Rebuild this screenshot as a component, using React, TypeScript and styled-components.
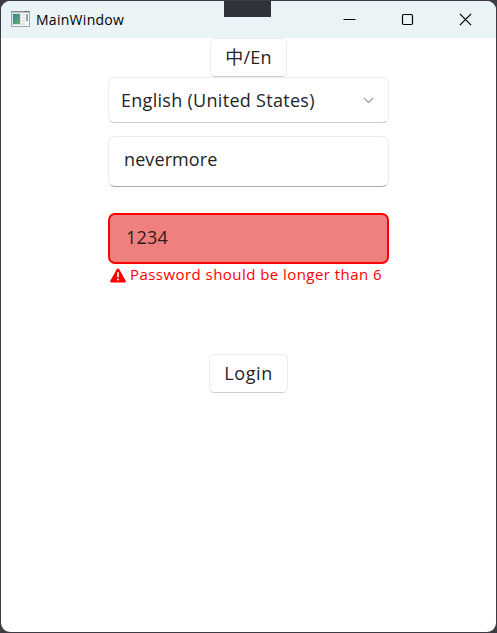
import React from "react";
import styled, { createGlobalStyle } from "styled-components";

const GlobalStyle = createGlobalStyle`
  *, *::before, *::after { box-sizing: border-box; }
  html, body { margin: 0; background: #3d3c44; overflow: hidden; }
`;

const Desktop = styled.div`
  width: 497px;
  height: 633px;
  padding: 1px;
  background: #3d3c44;
  font-family: "Open Sans", "Noto Sans CJK SC", sans-serif;
`;

const Window = styled.main`
  position: relative;
  width: 495px;
  height: 631px;
  display: flex;
  flex-direction: column;
  background: #fff;
  border-radius: 9px;
  overflow: hidden;
`;

const TitleBar = styled.header`
  height: 37px;
  flex: none;
  display: flex;
  align-items: center;
  padding: 0 2px 0 9px;
  background: #eaf4f7;
`;

const Title = styled.span`
  margin-left: 5px;
  flex: 1;
  font-size: 14px;
  line-height: 20px;
  letter-spacing: 0.28px;
  color: #000;
`;

const CaptionButton = styled.button`
  width: 58px;
  height: 37px;
  padding: 0 0 1px;
  border: 0;
  background: none;
  display: flex;
  align-items: center;
  justify-content: center;
`;

const TopNotch = styled.div`
  position: absolute;
  left: 223px;
  top: -1px;
  width: 47px;
  height: 17px;
  background: #2f323b;
`;

const Form = styled.form`
  display: flex;
  flex-direction: column;
  align-items: center;
`;

const Label = styled.span<{ $spacing?: number }>`
  font-size: 18px;
  line-height: 24px;
  letter-spacing: ${(p) => p.$spacing ?? 0}px;
  white-space: nowrap;
`;

const PushButton = styled.button<{ $width: number; $top?: number }>`
  width: ${(p) => p.$width}px;
  height: 39px;
  margin-top: ${(p) => p.$top ?? 0}px;
  padding: 0 0 2px;
  border: 1px solid #ececec;
  border-bottom-color: #cfcfcf;
  border-radius: 5px;
  background: #fff;
  color: #242424;
  font-family: inherit;
  display: flex;
  align-items: center;
  justify-content: center;
`;

const Select = styled.div`
  width: 281px;
  height: 46px;
  padding: 0 14px 0 12px;
  border: 1px solid #ececec;
  border-bottom-color: #cccccc;
  border-radius: 6px;
  color: #242424;
  display: flex;
  align-items: center;
  justify-content: space-between;
`;

const Field = styled.div<{ $invalid?: boolean }>`
  width: 281px;
  height: 51px;
  margin-top: ${(p) => (p.$invalid ? 26 : 13)}px;
  padding: ${(p) => (p.$invalid ? "10px 16px" : "10px 15px")};
  border: ${(p) => (p.$invalid ? "2px solid #ff0000" : "1px solid #ebebeb")};
  border-bottom-color: ${(p) => (p.$invalid ? "#ff0000" : "#a9a9a9")};
  border-radius: 7px;
  background: ${(p) => (p.$invalid ? "#f08080" : "#fff")};
  color: ${(p) => (p.$invalid ? "#301a1a" : "#242424")};
`;

const ErrorRow = styled.div`
  width: 281px;
  height: 22px;
  padding-left: 2px;
  display: flex;
  align-items: center;
  gap: 4px;
  color: #ff0000;
  font-size: 15px;
  line-height: 20px;
  letter-spacing: 0.45px;
  white-space: nowrap;
`;

const ErrorText = styled.span`
  padding-bottom: 2px;
`;

const AppIcon = () => (
  <svg width="21" height="17" viewBox="0 0 21 17">
    <defs>
      <linearGradient id="preview" x1="0" y1="0" x2="1" y2="1">
        <stop offset="0" stopColor="#3c78a2" />
        <stop offset="1" stopColor="#62b866" />
      </linearGradient>
    </defs>
    <rect x="1.5" y="0.5" width="18" height="15" fill="#f8f9fa" stroke="#a2a9ac" />
    <path d="M1 .8H20" stroke="#858e95" strokeWidth="1.5" />
    <path d="M14 .5h1m1 0h1m1 0h1" stroke="#4b5358" />
    <rect x="2" y="2" width="9" height="12" fill="#d9e0e0" />
    <rect x="3" y="3" width="7" height="10" fill="url(#preview)" />
    <path d="M12 4h3M12 7h3M12 10h3M12 13h3" stroke="#d7dadd" strokeWidth="1.5" />
    <rect x="16" y="3" width="2" height="7" fill="#83ad9f" />
  </svg>
);

const MinimizeIcon = () => (
  <svg width="13" height="13" viewBox="0 0 13 13">
    <path d="M.5 6.5H12.5" stroke="#000" strokeWidth="1" />
  </svg>
);

const MaximizeIcon = () => (
  <svg width="13" height="13" viewBox="0 0 13 13" fill="none">
    <rect x="1.5" y="1.5" width="10" height="10" rx="1.2" stroke="#000" strokeWidth="1.2" />
  </svg>
);

const CloseIcon = () => (
  <svg width="13" height="13" viewBox="0 0 13 13">
    <path d="M.9.9l11.2 11.2M12.1.9.9 12.1" stroke="#000" strokeWidth="1.2" />
  </svg>
);

const ChevronIcon = () => (
  <svg width="11" height="7" viewBox="0 0 11 7" fill="none">
    <path d="M.8.9l4.7 4.6L10.2.9" stroke="#9897a1" strokeWidth="1.2" />
  </svg>
);

const WarningIcon = () => (
  <svg width="16" height="15" viewBox="0 0 16 15">
    <path d="M8 .5q.8 0 1.2.7l6.5 11.5q.6 1.8-1.2 1.8h-13q-1.8 0-1.2-1.8L6.8 1.2Q7.2.5 8 .5Z" fill="#f00" />
    <path d="M8 4.7v4.1" stroke="#fff" strokeWidth="1.6" strokeLinecap="round" />
    <circle cx="8" cy="11.6" r="1" fill="#fff" />
  </svg>
);

export default function App() {
  return (
    <Desktop>
      <GlobalStyle />
      <Window>
        <TitleBar>
          <AppIcon />
          <Title>MainWindow</Title>
          <CaptionButton aria-label="Minimize"><MinimizeIcon /></CaptionButton>
          <CaptionButton aria-label="Maximize"><MaximizeIcon /></CaptionButton>
          <CaptionButton aria-label="Close"><CloseIcon /></CaptionButton>
        </TitleBar>
        <TopNotch />
        <Form onSubmit={(e) => e.preventDefault()}>
          <PushButton type="button" $width={77}><Label $spacing={0.2}>中/En</Label></PushButton>
          <Select><Label $spacing={0.29}>English (United States)</Label><ChevronIcon /></Select>
          <Field><Label $spacing={0.1}>nevermore</Label></Field>
          <Field $invalid><Label $spacing={0.2}>1234</Label></Field>
          <ErrorRow role="alert"><WarningIcon /><ErrorText>Password should be longer than 6</ErrorText></ErrorRow>
          <PushButton $width={79} $top={68}><Label $spacing={0.6}>Login</Label></PushButton>
        </Form>
      </Window>
    </Desktop>
  );
}
